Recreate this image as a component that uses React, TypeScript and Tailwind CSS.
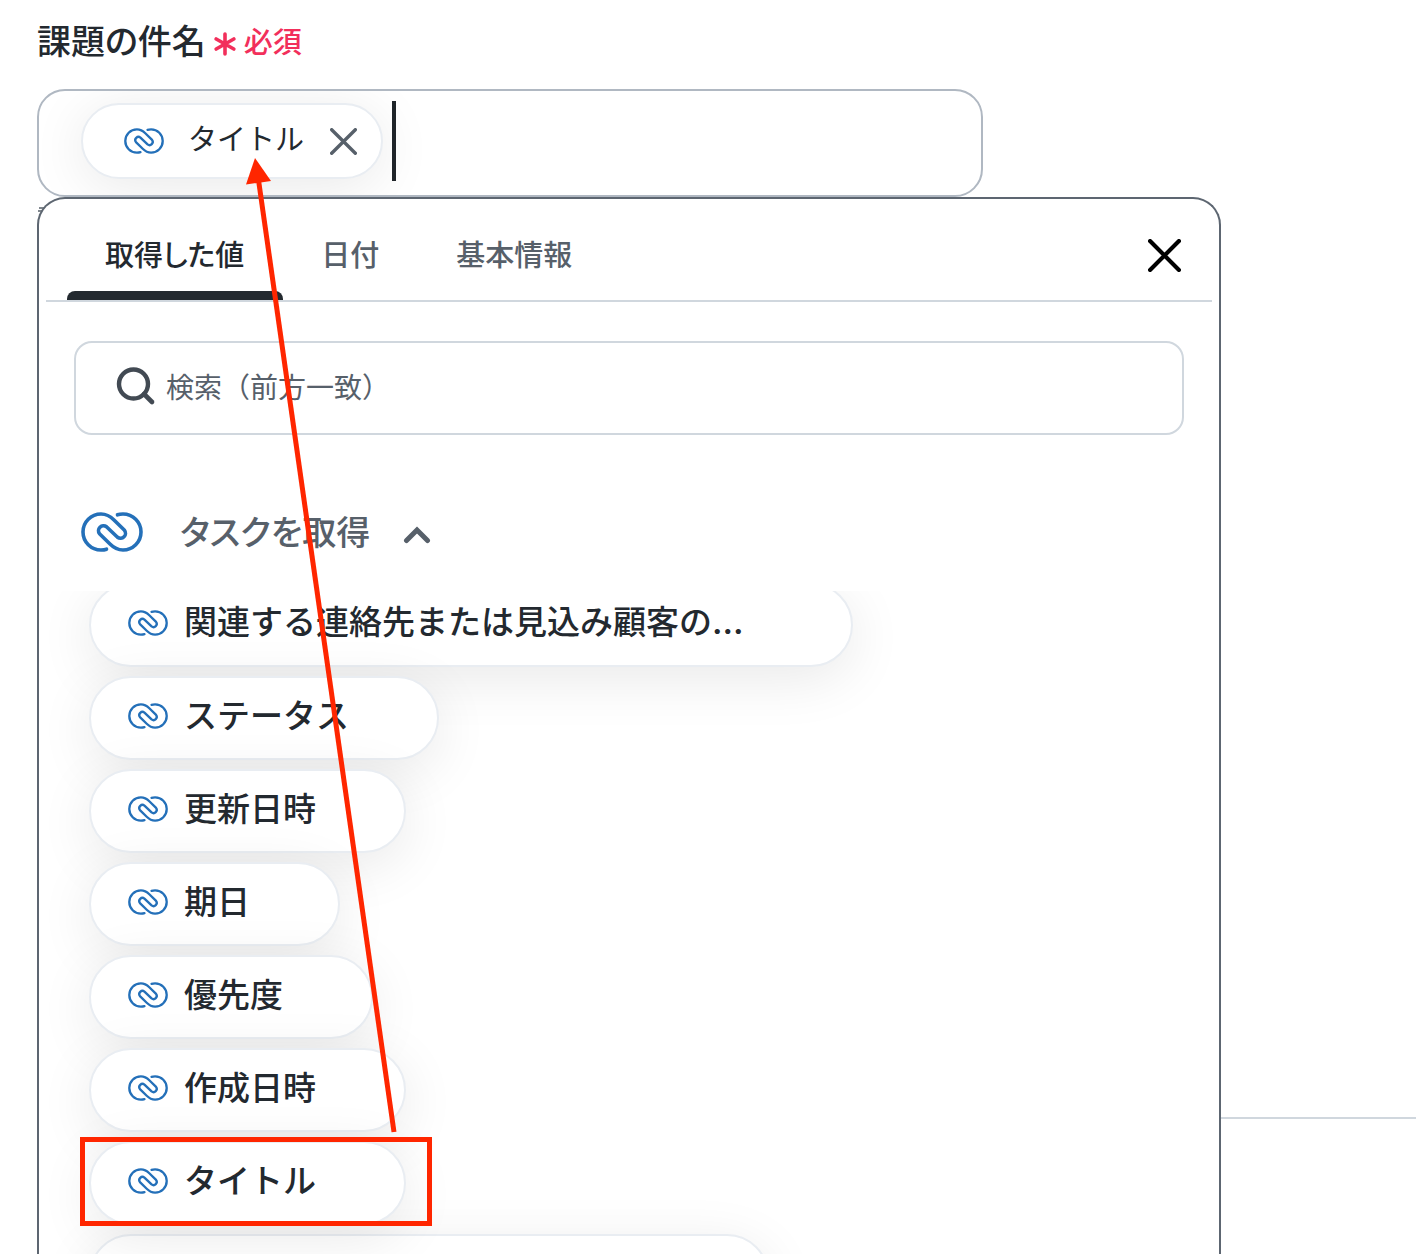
import React, { useState } from "react";

interface IFieldValue {
  id: string;
  label: string;
  ellipsis?: boolean;
  highlighted?: boolean;
}

const TABS = ["取得した値", "日付", "基本情報"];

const FIELD_VALUES: IFieldValue[] = [
  { id: "related", label: "関連する連絡先または見込み顧客の", ellipsis: true },
  { id: "status", label: "ステータス" },
  { id: "updated", label: "更新日時" },
  { id: "due", label: "期日" },
  { id: "priority", label: "優先度" },
  { id: "created", label: "作成日時" },
  { id: "title", label: "タイトル", highlighted: true },
];

// Linked rings used for every value that comes from the CRM
const CrmIcon = ({ className }: { className: string }) => (
  <svg
    viewBox="0 0 62 40"
    className={className}
    fill="none"
    stroke="#2470b9"
    strokeWidth="3.6"
    strokeLinecap="round"
    strokeLinejoin="round"
    aria-hidden="true"
  >
    <path d="M25.5 37.2C23.8 37.8 22 38 20 38A18 18 0 0 1 20 2C25.5 2 29.5 4.5 33 8L43.5 18.3A5 5 0 0 1 36.5 25.3L25.5 14.7A5 5 0 0 0 18.5 21.7L29 32C32.5 35.5 36.5 38 42 38A18 18 0 0 0 42 2C40 2 38.2 2.2 36.5 2.8" />
  </svg>
);

const CrossIcon = ({ className }: { className: string }) => (
  <svg
    viewBox="0 0 32 32"
    className={className}
    fill="none"
    stroke="currentColor"
    strokeWidth="4"
    strokeLinecap="round"
    aria-hidden="true"
  >
    <path d="M2 2L30 30M30 2L2 30" />
  </svg>
);

const ValuePill = ({ label, ellipsis, highlighted }: IFieldValue) => (
  <li className="relative">
    <button
      type="button"
      className={`flex h-[84px] items-center gap-4 rounded-full border-2 border-[#e9edf2] bg-white pb-1 pl-[37px] text-[33px] leading-[48px] font-medium whitespace-nowrap text-[#23292f] shadow-[0_12px_56px_rgba(0,0,0,0.09)] ${
        ellipsis ? "pr-[107px]" : "pr-[88px]"
      }`}
    >
      <CrmIcon className="h-[26px] w-10 shrink-0" />
      <span className="pb-1">
        {label}
        {ellipsis && <span className="font-['Inter'] font-semibold">…</span>}
      </span>
    </button>
    {highlighted && (
      <div className="pointer-events-none absolute -top-1 -left-[9px] h-[89px] w-[352px] border-[5px] border-[#ff2600]" />
    )}
  </li>
);

export default function App() {
  const [activeTab, setActiveTab] = useState(TABS[0]);

  return (
    <div className="relative h-screen overflow-hidden bg-white pt-[14px] pl-[37px] font-['Noto_Sans_CJK_JP',sans-serif] text-[#23292f]">
      <label
        htmlFor="subject"
        className="flex items-center text-[34px] leading-[52px] font-medium [font-feature-settings:'palt']"
      >
        課題の件名
        <svg
          viewBox="0 0 22 24"
          className="mt-2 ml-2 h-6 w-[22px]"
          fill="none"
          stroke="#f22f5b"
          strokeWidth="3.6"
          strokeLinecap="round"
          aria-hidden="true"
        >
          <path d="M11 2v20M2.200 7l17.600 10M19.800 7l-17.600 10" />
        </svg>
        <span className="ml-2 text-[29px] text-[#f22f5b]">必須</span>
      </label>

      <div className="mt-[23px] flex h-[108px] w-full max-w-[946px] items-center overflow-hidden rounded-[28px] border-2 border-[#b0b8c2] bg-white pb-1 pl-[42px]">
        <div className="flex h-[76px] shrink-0 items-center rounded-full border-2 border-[#e9edf2] bg-white pr-6 pl-[41px] shadow-[0_8px_56px_rgba(0,0,0,0.09)]">
          <CrmIcon className="h-[26px] w-10" />
          <span className="ml-6 pb-2 text-[29px] leading-[42px]">タイトル</span>
          <button type="button" aria-label="削除" className="ml-[26px] text-[#57606a]">
            <CrossIcon className="h-[27px] w-[27px]" />
          </button>
        </div>
        <span className="ml-[9px] h-20 w-1 shrink-0 bg-[#1f2429]" />
        <input
          id="subject"
          type="text"
          className="h-full min-w-0 flex-1 bg-transparent px-2 text-[29px] outline-none"
        />
      </div>

      <div className="relative flex items-start">
        {/* Field description, all but its first strokes lies under the panel */}
        <svg
          viewBox="0 0 8 8"
          className="absolute top-[9px] left-0 h-2 w-2"
          stroke="#57606a"
          strokeWidth="1.5"
          aria-hidden="true"
        >
          <path d="M2 2h6M1 5h6" />
        </svg>
        <section className="relative z-10 h-[1100px] w-full max-w-[1184px] rounded-t-[28px] border-2 border-b-0 border-[#5d6671] bg-white px-[7px]">
          <div className="flex h-[103px] items-stretch border-b-2 border-[#d0d7de] pr-[31px] pl-[21px]">
            <div role="tablist" className="flex flex-1">
              {TABS.map((tab) => (
                <button
                  key={tab}
                  type="button"
                  role="tab"
                  aria-selected={tab === activeTab}
                  onClick={() => setActiveTab(tab)}
                  className={`flex flex-col text-[29px] leading-[42px] font-medium [font-feature-settings:'palt'] ${
                    tab === activeTab ? "text-[#23292f]" : "text-[#57606a]"
                  }`}
                >
                  <span className="flex-1 pt-[33px] pr-[39px] pl-[38px]">{tab}</span>
                  {tab === activeTab && (
                    <span className="h-[9px] w-full rounded-t-lg bg-[#23292f]" />
                  )}
                </button>
              ))}
            </div>
            <button type="button" aria-label="閉じる" className="mt-3 text-black">
              <CrossIcon className="h-[33px] w-[33px]" />
            </button>
          </div>

          <div className="mt-[39px] px-7">
            <div className="flex h-[94px] items-center rounded-[18px] border-2 border-[#d0d7de] pl-10">
              <svg
                viewBox="0 0 40 40"
                className="-mt-1 h-10 w-10 shrink-0"
                fill="none"
                stroke="#424a53"
                strokeLinecap="round"
                aria-hidden="true"
              >
                <circle cx="17.500" cy="18" r="14.5" strokeWidth="4.4" />
                <path d="M28 28L36 36" strokeWidth="4.6" />
              </svg>
              <input
                type="text"
                aria-label="検索"
                placeholder="検索（前方一致）"
                className="ml-[10px] h-full min-w-0 flex-1 bg-transparent pb-1 text-[28px] outline-none placeholder:text-[#57606a]"
              />
            </div>
          </div>

          <div className="relative z-10 mt-[37px] bg-white px-[35px]">
            <button
              type="button"
              className="flex h-[119px] items-center text-[34px] leading-[48px] font-medium text-[#57606a] [font-feature-settings:'palt']"
            >
              <CrmIcon className="h-10 w-[62px]" />
              <span className="ml-[37px] pb-[2px]">タスクを取得</span>
              <svg
                viewBox="0 0 28 18"
                className="mt-[6px] ml-[33px] h-[18px] w-7"
                fill="none"
                stroke="currentColor"
                strokeWidth="5"
                strokeLinecap="round"
                aria-hidden="true"
              >
                <path d="M3.5 14.500L14 4L24.500 14.500" />
              </svg>
            </button>
          </div>

          <ul className="-mt-2 flex flex-col items-start gap-[9px] pl-[43px]">
            {FIELD_VALUES.map((value) => (
              <ValuePill key={value.id} {...value} />
            ))}
            <li className="h-[84px] w-[680px] rounded-full border-2 border-[#e9edf2] bg-white shadow-[0_12px_56px_rgba(0,0,0,0.09)]" />
          </ul>
        </section>
        <hr className="mt-[920px] min-w-0 flex-1 border-t-2 border-[#d0d7de]" />
      </div>

      {/* Arrow from the picked value up to the field */}
      <svg
        viewBox="0 0 160 980"
        className="pointer-events-none absolute top-[156px] left-[240px] z-20 h-[980px] w-[160px]"
        aria-hidden="true"
      >
        <path d="M154 976L18.5 24" stroke="#ff2600" strokeWidth="5" />
        <path d="M15 2L31 25L6 28.500Z" fill="#ff2600" />
      </svg>
    </div>
  );
}
